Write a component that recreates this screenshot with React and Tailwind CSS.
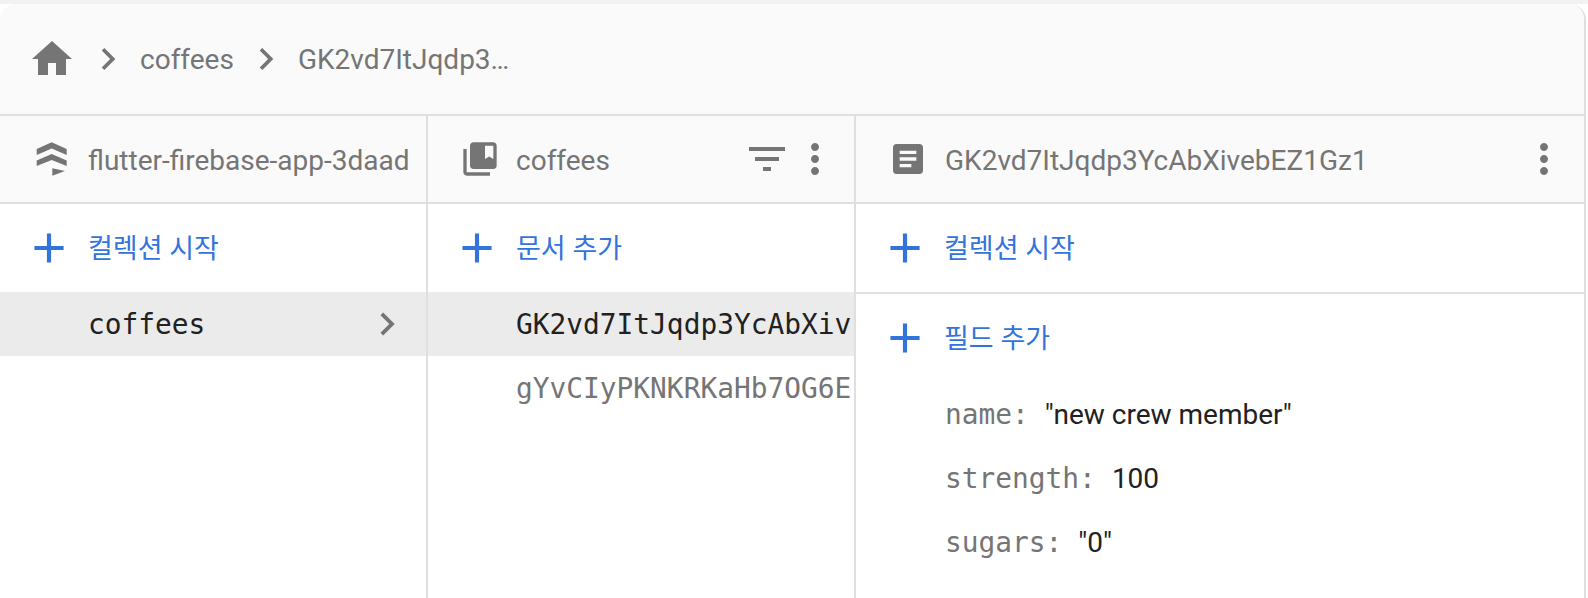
import React from "react";

const P = {
  home: "M10 20v-6h4v6h5v-8h3L12 3 2 12h3v8z",
  chev: "M10 6 8.59 7.41 13.17 12l-4.58 4.59L10 18l6-6z",
  coll: "M4 6H2v14c0 1.1.9 2 2 2h14v-2H4V6zm16-4H8c-1.1 0-2 .9-2 2v12c0 1.1.9 2 2 2h12c1.1 0 2-.9 2-2V4c0-1.1-.9-2-2-2zm0 10l-2.5-1.5L15 12V4h5v8z",
  doc: "M19 3H5c-1.1 0-2 .9-2 2v14c0 1.1.9 2 2 2h14c1.1 0 2-.9 2-2V5c0-1.1-.9-2-2-2zm-5 14H7v-2h7v2zm3-4H7v-2h10v2zm0-4H7V7h10v2z",
  filter: "M10 18h4v-2h-4v2zM3 6v2h18V6H3zm3 7h12v-2H6v2z",
  more: "M12 8c1.1 0 2-.9 2-2s-.9-2-2-2-2 .9-2 2 .9 2 2 2zm0 2c-1.1 0-2 .9-2 2s.9 2 2 2 2-.9 2-2-.9-2-2-2zm0 6c-1.1 0-2 .9-2 2s.9 2 2 2 2-.9 2-2-.9-2-2-2z",
  plus: "M19 13h-6v6h-2v-6H5v-2h6V5h2v6h6v2z",
};

function Icon({ d, className }) {
  return (
    <svg viewBox="0 0 24 24" fill="currentColor" className={className}>
      <path d={d} />
    </svg>
  );
}

function Layers() {
  return (
    <svg viewBox="0 0 60 60" fill="currentColor" className="ml-[20px] mr-[8px] w-[60px] h-[60px] shrink-0">
      <path d="M31.700 13.300 46.700 20v6l-15-6.500-15 6.500v-6zM31.700 25l15 6.500V37l-15-6-15 6v-5.500zM32.300 39.300 45 42l-12.700 4.700z" />
    </svg>
  );
}

function AddRow({ label, cls }) {
  return (
    <div className={`shrink-0 flex items-center pl-[24px] text-[#3273dc] ${cls}`}>
      <Icon d={P.plus} className="w-[50px] h-[50px] shrink-0" />
      <span className="ml-[14px] text-[27px] leading-none pt-[2px]">{label}</span>
    </div>
  );
}

function ColHead({ icon, iconClass, title, children }) {
  return (
    <div className="h-[88px] shrink-0 flex items-center bg-[#fafafa] border-b-2 border-[#dfdfdf] text-[#757575]">
      {icon ? <Icon d={icon} className={iconClass} /> : <Layers />}
      <span className="text-[28px] leading-none whitespace-nowrap pt-[3px]">{title}</span>
      {children}
    </div>
  );
}

function Field({ k, v }) {
  return (
    <div className="h-[64px] flex items-center">
      <span className="text-[#757575] font-['DejaVu_Sans_Mono',monospace] text-[27.85px]">{k}:</span>
      <span className="ml-[16px] text-[#212121] text-[28px]">{v}</span>
    </div>
  );
}

export default function App() {
  return (
    <div className="h-[598px] w-[1588px] overflow-hidden bg-white font-['Roboto','Noto_Sans_CJK_KR',sans-serif]">
      <div className="h-[4px] bg-[#f0f2f3]" />
      <div className="w-[1586px] h-[594px] flex flex-col bg-white rounded-t-[16px] overflow-hidden border-r-2 border-[#dfdfdf]">
        <div className="h-[112px] shrink-0 flex items-center bg-[#fafafa] border-b-2 border-[#dfdfdf] text-[#757575]">
          <Icon d={P.home} className="ml-[28px] w-[48px] h-[48px] shrink-0" />
          <Icon d={P.chev} className="ml-[10px] w-[44px] h-[44px] shrink-0" />
          <span className="ml-[10px] text-[28px] leading-none pt-[2px]">coffees</span>
          <Icon d={P.chev} className="ml-[10px] w-[44px] h-[44px] shrink-0" />
          <span className="ml-[10px] text-[28px] leading-none pt-[2px]">GK2vd7ItJqdp3…</span>
        </div>
        <div className="flex-1 flex min-h-0">
          <div className="w-[428px] shrink-0 border-r-2 border-[#dfdfdf] flex flex-col">
            <ColHead title="flutter-firebase-app-3daad" />
            <AddRow label="컬렉션 시작" cls="h-[88px]" />
            <div className="h-[64px] flex items-center bg-[#ebebeb] pl-[88px] pr-[16px] justify-between">
              <span className="text-[#212121] font-['DejaVu_Sans_Mono',monospace] text-[27.85px] pt-[2px]">coffees</span>
              <Icon d={P.chev} className="w-[46px] h-[46px] text-[#757575]" />
            </div>
          </div>
          <div className="w-[428px] shrink-0 border-r-2 border-[#dfdfdf] flex flex-col">
            <ColHead icon={P.coll} iconClass="ml-[32px] mr-[16px] w-[40px] h-[40px] shrink-0" title="coffees">
              <div className="ml-auto mr-[15px] flex items-center">
                <Icon d={P.filter} className="w-[48px] h-[48px]" />
                <Icon d={P.more} className="w-[48px] h-[48px]" />
              </div>
            </ColHead>
            <AddRow label="문서 추가" cls="h-[88px]" />
            <div className="h-[64px] flex items-center bg-[#ebebeb] pl-[88px] pt-[2px] text-[#212121] font-['DejaVu_Sans_Mono',monospace] text-[27.85px] whitespace-nowrap overflow-hidden">GK2vd7ItJqdp3YcAbXiv</div>
            <div className="h-[64px] flex items-center pl-[88px] pt-[2px] text-[#757575] font-['DejaVu_Sans_Mono',monospace] text-[27.85px] whitespace-nowrap overflow-hidden">gYvCIyPKNKRKaHb7OG6E</div>
          </div>
          <div className="flex-1 flex flex-col min-w-0">
            <ColHead icon={P.doc} iconClass="ml-[32px] mr-[17px] w-[40px] h-[40px] shrink-0" title="GK2vd7ItJqdp3YcAbXivebEZ1Gz1">
              <Icon d={P.more} className="ml-auto mr-[16px] w-[48px] h-[48px] shrink-0" />
            </ColHead>
            <AddRow label="컬렉션 시작" cls="h-[90px] border-b-2 border-[#dfdfdf]" />
            <AddRow label="필드 추가" cls="h-[88px]" />
            <div className="pl-[89px] flex flex-col mt-[1px]">
              <Field k="name" v={'"new crew member"'} />
              <Field k="strength" v="100" />
              <Field k="sugars" v={'"0"'} />
            </div>
          </div>
        </div>
      </div>
    </div>
  );
}
